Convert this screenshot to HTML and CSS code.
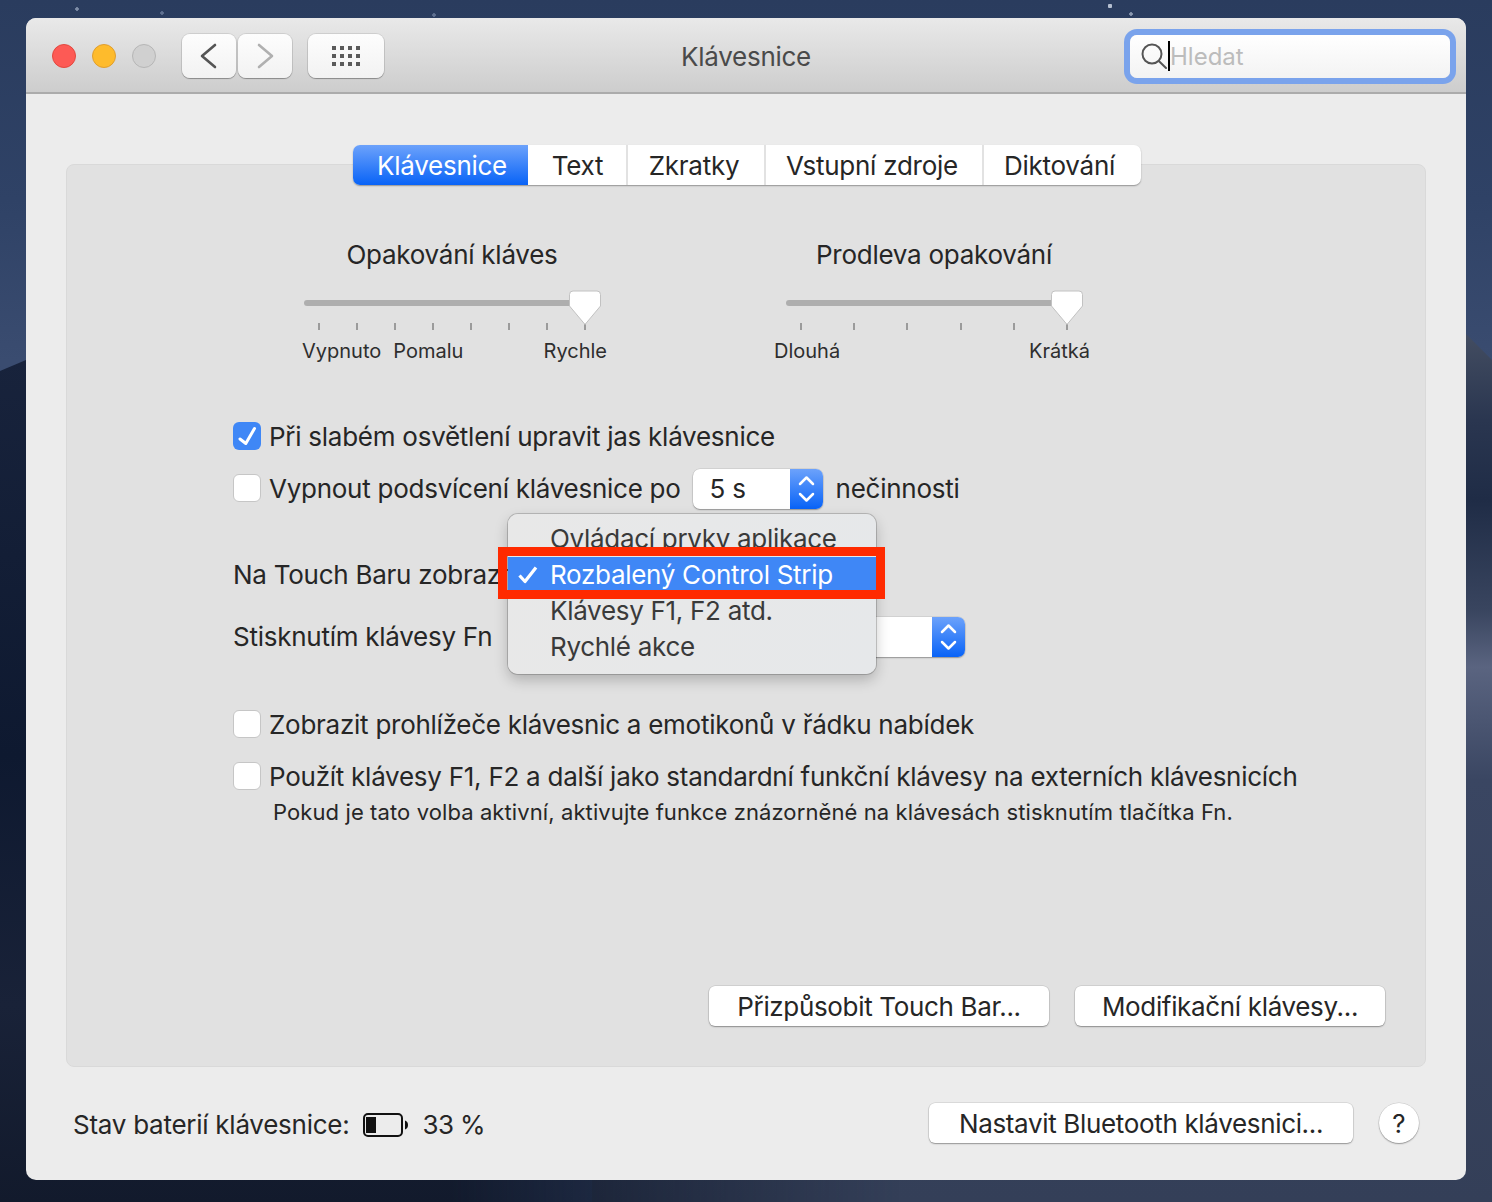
FILE: index.html
```html
<!DOCTYPE html>
<html lang="cs">
<head>
<meta charset="utf-8">
<title>Klávesnice</title>
<link rel="stylesheet" href="styles.css">
</head>
<body>
<div class="dune dune-right"></div>
<div class="dune dune-left"></div>
<main class="window">
  <header class="titlebar">
    <div class="tools">
      <div class="lights">
        <span class="light red"></span>
        <span class="light yellow"></span>
        <span class="light gray"></span>
      </div>
      <div class="nav">
        <button class="tool nav-btn"><svg width="54" height="44" viewBox="0 0 54 44"><path d="M33 11 20 22 33 33" fill="none" stroke="#555" stroke-width="2.6" stroke-linecap="round" stroke-linejoin="round"/></svg></button>
        <button class="tool nav-btn"><svg width="54" height="44" viewBox="0 0 54 44"><path d="M21 11 34 22 21 33" fill="none" stroke="#b0b0b0" stroke-width="2.6" stroke-linecap="round" stroke-linejoin="round"/></svg></button>
      </div>
      <button class="tool grid-btn"><svg width="76" height="44" viewBox="0 0 76 44" fill="#5a5a5a"><rect x="24" y="12" width="4" height="4"/><rect x="32" y="12" width="4" height="4"/><rect x="40" y="12" width="4" height="4"/><rect x="48" y="12" width="4" height="4"/><rect x="24" y="20" width="4" height="4"/><rect x="32" y="20" width="4" height="4"/><rect x="40" y="20" width="4" height="4"/><rect x="48" y="20" width="4" height="4"/><rect x="24" y="28" width="4" height="4"/><rect x="32" y="28" width="4" height="4"/><rect x="40" y="28" width="4" height="4"/><rect x="48" y="28" width="4" height="4"/></svg></button>
    </div>
    <h1 class="title">Klávesnice</h1>
    <div class="search">
      <svg class="search-icon" width="27" height="30" viewBox="0 0 27 30"><circle cx="12" cy="13" r="9.5" fill="none" stroke="#555" stroke-width="2"/><path d="M18.8 20 26 27" stroke="#555" stroke-width="2" stroke-linecap="round"/></svg>
      <span class="caret"></span>
      <span class="placeholder">Hledat</span>
    </div>
  </header>

  <section class="content">
    <div class="panel">
      <nav class="tabs">
        <span class="tab active">Klávesnice</span>
        <span class="tab">Text</span>
        <span class="tab">Zkratky</span>
        <span class="tab">Vstupní zdroje</span>
        <span class="tab">Diktování</span>
      </nav>

      <div class="sliders">
        <div class="slider">
          <div class="slider-title">Opakování kláves</div>
          <div class="track">
            <svg class="thumb" width="34" height="36" viewBox="0 0 34 36"><path d="M5 1H29a3.500 3.500 0 0 1 3.500 3.500V16L17 34.500 1.500 16V4.500A3.500 3.500 0 0 1 5 1Z" fill="#fff" stroke="#c2c2c2"/></svg>
          </div>
          <div class="ticks"><i></i><i></i><i></i><i></i><i></i><i></i><i></i><i></i></div>
          <div class="tick-labels"><span>Vypnuto</span><span class="pomalu">Pomalu</span><span class="end">Rychle</span></div>
        </div>
        <div class="slider">
          <div class="slider-title">Prodleva opakování</div>
          <div class="track">
            <svg class="thumb" width="34" height="36" viewBox="0 0 34 36"><path d="M5 1H29a3.500 3.500 0 0 1 3.500 3.500V16L17 34.500 1.500 16V4.500A3.500 3.500 0 0 1 5 1Z" fill="#fff" stroke="#c2c2c2"/></svg>
          </div>
          <div class="ticks"><i></i><i></i><i></i><i></i><i></i><i></i></div>
          <div class="tick-labels wide"><span>Dlouhá</span><span class="end">Krátká</span></div>
        </div>
      </div>

      <div class="rows">
        <label class="row r1"><span class="check on"><svg width="28" height="28" viewBox="0 0 28 28"><path d="M7 17 12.800 21.500 21.500 6.500" fill="none" stroke="#fff" stroke-width="3" stroke-linecap="round" stroke-linejoin="round"/></svg></span>Při slabém osvětlení upravit jas klávesnice</label>
        <div class="row r2"><span class="check"></span>Vypnout podsvícení klávesnice po
          <div class="select s-small"><span class="select-value">5 s</span><span class="stepper"><svg width="33" height="40" viewBox="0 0 33 40"><path d="M10 15 16.500 8.500 23 15M10 25 16.500 31.500 23 25" fill="none" stroke="#fff" stroke-width="2.500" stroke-linecap="round" stroke-linejoin="round"/></svg></span></div>
          <span class="after">nečinnosti</span>
        </div>
        <div class="row r3">Na Touch Baru zobrazit:</div>
        <div class="row r4"><span class="fn-label">Stisknutím klávesy Fn</span>
          <div class="select s-wide"><span class="select-value"></span><span class="stepper"><svg width="33" height="40" viewBox="0 0 33 40"><path d="M10 15 16.500 8.500 23 15M10 25 16.500 31.500 23 25" fill="none" stroke="#fff" stroke-width="2.500" stroke-linecap="round" stroke-linejoin="round"/></svg></span></div>
        </div>
        <label class="row r5"><span class="check"></span>Zobrazit prohlížeče klávesnic a emotikonů v řádku nabídek</label>
        <label class="row r6"><span class="check"></span>Použít klávesy F1, F2 a další jako standardní funkční klávesy na externích klávesnicích</label>
        <p class="hint">Pokud je tato volba aktivní, aktivujte funkce znázorněné na klávesách stisknutím tlačítka Fn.</p>
      </div>

      <div class="panel-actions">
        <button class="btn b-touch">Přizpůsobit Touch Bar...</button>
        <button class="btn b-mod">Modifikační klávesy...</button>
      </div>
    </div>

    <footer class="footer">
      <span class="battery-label">Stav baterií klávesnice:</span>
      <svg class="battery" width="46" height="24" viewBox="0 0 46 24"><rect x="1" y="1" width="38" height="22" rx="4" fill="none" stroke="#111" stroke-width="2"/><rect x="3" y="4" width="10" height="16" fill="#111"/><path d="M42 7.500c2.200.6 3 2.300 3 4.500s-.8 3.900-3 4.500Z" fill="#111"/></svg>
      <span class="battery-value">33 %</span>
      <button class="btn b-bt">Nastavit Bluetooth klávesnici...</button>
      <button class="help">?</button>
    </footer>
  </section>

  <div class="menu">
    <div class="menu-item">Ovládací prvky aplikace</div>
    <div class="menu-item selected"><svg class="menu-check" width="22" height="20" viewBox="0 0 22 20"><path d="M2.500 10.500 8 16.500 19 2.500" fill="none" stroke="#fff" stroke-width="3.200" stroke-linejoin="round"/></svg>Rozbalený Control Strip</div>
    <div class="menu-item">Klávesy F1, F2 atd.</div>
    <div class="menu-item">Rychlé akce</div>
  </div>
  <div class="highlight"></div>
</main>
</body>
</html>
```
FILE: styles.css
```css
* { box-sizing: border-box; }
html, body { margin: 0; height: 100%; }
body {
  position: relative;
  width: 1492px;
  height: 1202px;
  overflow: hidden;
  padding: 18px 26px 22px;
  font-family: Inter, "Liberation Sans", sans-serif;
  font-size: 26px;
  letter-spacing: -.26px;
  color: #262626;
  background:
    radial-gradient(circle at 77px 9px, #7f8ea8 0 1.5px, transparent 2px),
    radial-gradient(circle at 162px 13px, #5f7090 0 1.5px, transparent 2px),
    radial-gradient(circle at 434px 15px, #5f7090 0 1.5px, transparent 2px),
    radial-gradient(circle at 1110px 6px, #b5bfd0 0 2px, transparent 2.5px),
    radial-gradient(circle at 1131px 14px, #8a98b0 0 1.5px, transparent 2px),
    linear-gradient(#2a3c5e 0, #2f4266 200px, #3a4c70 360px, #33456a 1202px);
}
.dune { position: absolute; bottom: 0; }
.dune-right {
  right: 0;
  top: 330px;
  width: 900px;
  clip-path: polygon(0 40px, 870px 0, 100% 30px, 100% 100%, 0 100%);
  background: linear-gradient(#444e62 0, #2a3650 90px, #1f2c46 170px, #39455f 280px, #5a6480 337px, #3a4662 450px, #343f58 870px);
}
.dune-left {
  left: 0;
  top: 355px;
  width: 900px;
  clip-path: polygon(0 16px, 26px 5px, 100% 0, 100% 100%, 0 100%);
  background: linear-gradient(#18233c 0, #0e1930 400px, #192238 650px, #121a2c 100%);
  -webkit-mask-image: linear-gradient(to right, #000 50%, transparent 100%);
  mask-image: linear-gradient(to right, #000 50%, transparent 100%);
}

.window {
  position: relative;
  z-index: 1;
  display: flex;
  flex-direction: column;
  width: 1440px;
  height: 1162px;
  border-radius: 10px;
  background: #ececec;
  overflow: hidden;
}

.titlebar {
  display: grid;
  grid-template-columns: 1fr auto 1fr;
  align-items: center;
  flex: none;
  height: 76px;
  padding: 2px 16px 0;
  border-bottom: 2px solid #ababab;
  background: linear-gradient(#e9e9e9, #cdcdcd);
}
.tools { display: flex; align-items: center; margin-left: 10px; }
.lights { display: flex; gap: 16px; margin-right: 26px; }
.light { width: 24px; height: 24px; border-radius: 50%; border: 1px solid; }
.red { background: #fd5a55; border-color: #e2483f; }
.yellow { background: #febb2c; border-color: #df9e2f; }
.gray { background: #d0d0d0; border-color: #b6b6b6; }
.nav { display: flex; gap: 2px; margin-right: 16px; }
.tool {
  display: block;
  height: 44px;
  padding: 0;
  border: 0;
  border-radius: 8px;
  background: linear-gradient(#fdfdfd, #f2f2f2);
  box-shadow: 0 0 0 1px rgba(0, 0, 0, .09), 0 1px 1px rgba(0, 0, 0, .28);
}
.tool svg { display: block; }
.nav-btn { width: 54px; }
.grid-btn { width: 76px; }
.title {
  margin: 0;
  font-size: 26px;
  font-weight: 400;
  color: #4a4a4a;
}
.search {
  justify-self: end;
  display: flex;
  align-items: center;
  width: 320px;
  height: 43px;
  padding-left: 10px;
  border-radius: 7px;
  background: linear-gradient(#fff, #f3f3f3);
  box-shadow: 0 0 0 6px #7aa3ec;
}
.search-icon { flex: none; }
.caret { flex: none; width: 2px; height: 30px; margin-left: 1px; background: #000; }
.placeholder { color: #bcbcbc; font-size: 24px; letter-spacing: 0; }

.content {
  display: flex;
  flex-direction: column;
  flex: 1;
  min-height: 0;
  padding: 70px 40px 37px;
}
.panel {
  display: flex;
  flex-direction: column;
  flex: 1;
  min-height: 0;
  border: 1px solid #d9d9d9;
  border-radius: 8px;
  background: #e1e1e1;
  padding: 0 40px 40px 0;
}
.tabs {
  display: grid;
  grid-template-columns: 175px 98px 138px 218px 159px;
  align-self: flex-start;
  height: 40px;
  margin: -20px 0 0 286px;
  border-radius: 7px;
  background: #fff;
  box-shadow: 0 1px 1.5px rgba(0, 0, 0, .35);
}
.tab {
  display: flex;
  align-items: center;
  justify-content: center;
  padding-right: 4px;
  border-left: 2px solid #e2e2e2;
}
.tab:first-child { border-left: 0; }
.tab:last-child { padding-right: 6px; }
.tab.active {
  padding: 0 0 0 3px;
  color: #fff;
  border-radius: 7px 0 0 7px;
  background: linear-gradient(#6ca2fb, #0863f7);
}
.tab.active + .tab { padding: 0 0 0 1px; border-left: 0; }

.sliders {
  display: flex;
  gap: 186px;
  margin: 54px 0 0 237px;
}
.slider { width: 296px; }
.slider-title { height: 32px; line-height: 32px; text-align: center; }
.track {
  position: relative;
  height: 6px;
  margin-top: 29px;
  border-radius: 3px;
  background: #aeaeae;
}
.thumb { position: absolute; top: -10px; right: -2px; }
.ticks {
  display: flex;
  justify-content: space-between;
  height: 7px;
  margin-top: 17px;
  padding: 0 14px;
}
.ticks i { display: block; width: 2px; height: 7px; background: #9b9b9b; }
.tick-labels {
  display: flex;
  height: 24px;
  margin: 9px -7px 0 -2px;
  font-size: 20px;
  line-height: 24px;
  letter-spacing: 0;
  color: #2e2e2e;
}
.tick-labels.wide { margin: 9px -8px 0 -12px; }
.pomalu { margin-left: 12px; }
.end { margin-left: auto; }

.rows { padding-left: 166px; }
.row {
  display: flex;
  align-items: center;
  height: 40px;
  white-space: nowrap;
}
.r1 { margin-top: 53px; }
.r2 { margin-top: 12px; }
.r3 { margin-top: 46px; }
.r4 { margin-top: 22px; }
.r5 { margin-top: 48px; }
.r6 { margin-top: 12px; }
.check {
  flex: none;
  width: 28px;
  height: 28px;
  margin-right: 8px;
  border: 1px solid #c6c6c6;
  border-radius: 6px;
  background: #fff;
}
.check.on { border: 0; background: #3f87f6; }
.check svg { display: block; }
.select {
  display: flex;
  flex: none;
  height: 40px;
  border-radius: 7px;
  background: #fff;
  box-shadow: 0 0 0 .5px rgba(0, 0, 0, .12), 0 1px 1.5px rgba(0, 0, 0, .3);
  overflow: hidden;
}
.r2 .select { margin: 2px 0 0 12px; }
.s-small { width: 130px; }
.s-wide { width: 455px; margin: 1px 0 0 18px; }
.select-value { flex: 1; padding-left: 17px; line-height: 40px; }
.stepper { flex: none; width: 33px; background: linear-gradient(#6ca2fb, #0863f7); }
.stepper svg { display: block; }
.after { margin-left: 13px; }
.hint {
  margin: 2px 0 0 40px;
  font-size: 22px;
  line-height: 28px;
  letter-spacing: .1px;
  white-space: nowrap;
}
.panel-actions {
  display: flex;
  justify-content: flex-end;
  gap: 26px;
  margin-top: auto;
}
.btn {
  height: 40px;
  padding: 0;
  border: 0;
  border-radius: 6px;
  background: #fff;
  font: inherit;
  letter-spacing: -.34px;
  color: #262626;
  box-shadow: 0 0 0 .5px rgba(0, 0, 0, .14), 0 1px 1.5px rgba(0, 0, 0, .32);
}
.b-touch { width: 340px; }
.b-mod { width: 310px; }
.b-bt { width: 424px; margin-left: auto; }
.help {
  width: 40px;
  height: 40px;
  margin-left: 26px;
  padding: 0;
  border: 0;
  border-radius: 50%;
  background: #fff;
  font: inherit;
  color: #262626;
  box-shadow: 0 0 0 .5px rgba(0, 0, 0, .14), 0 1px 1.5px rgba(0, 0, 0, .32);
}
.footer {
  display: flex;
  align-items: center;
  flex: none;
  height: 40px;
  margin-top: 36px;
  padding: 0 7px;
}
.battery { flex: none; margin: 4px 13px 0 14px; }
.battery-label { padding-top: 2px; }
.battery-value { padding-top: 2px; letter-spacing: -.6px; }

.menu {
  position: absolute;
  left: 482px;
  top: 496px;
  width: 368px;
  height: 160px;
  padding: 7px 0;
  border-radius: 10px;
  background: linear-gradient(100deg, #e8e8e8, #e6e8ea);
  box-shadow: 0 0 0 1px rgba(0, 0, 0, .18), 0 6px 14px rgba(0, 0, 0, .22);
  color: #3a3a3a;
  letter-spacing: -.3px;
}
.menu-item {
  position: relative;
  height: 36px;
  padding-left: 42px;
  line-height: 36px;
  white-space: nowrap;
}
.menu-item.selected { color: #fff; background: #3f87f6; }
.menu-check { position: absolute; left: 9px; top: 8px; }
.highlight {
  position: absolute;
  left: 472px;
  top: 529px;
  width: 387px;
  height: 52px;
  border: 9px solid #ff2a00;
}
```
